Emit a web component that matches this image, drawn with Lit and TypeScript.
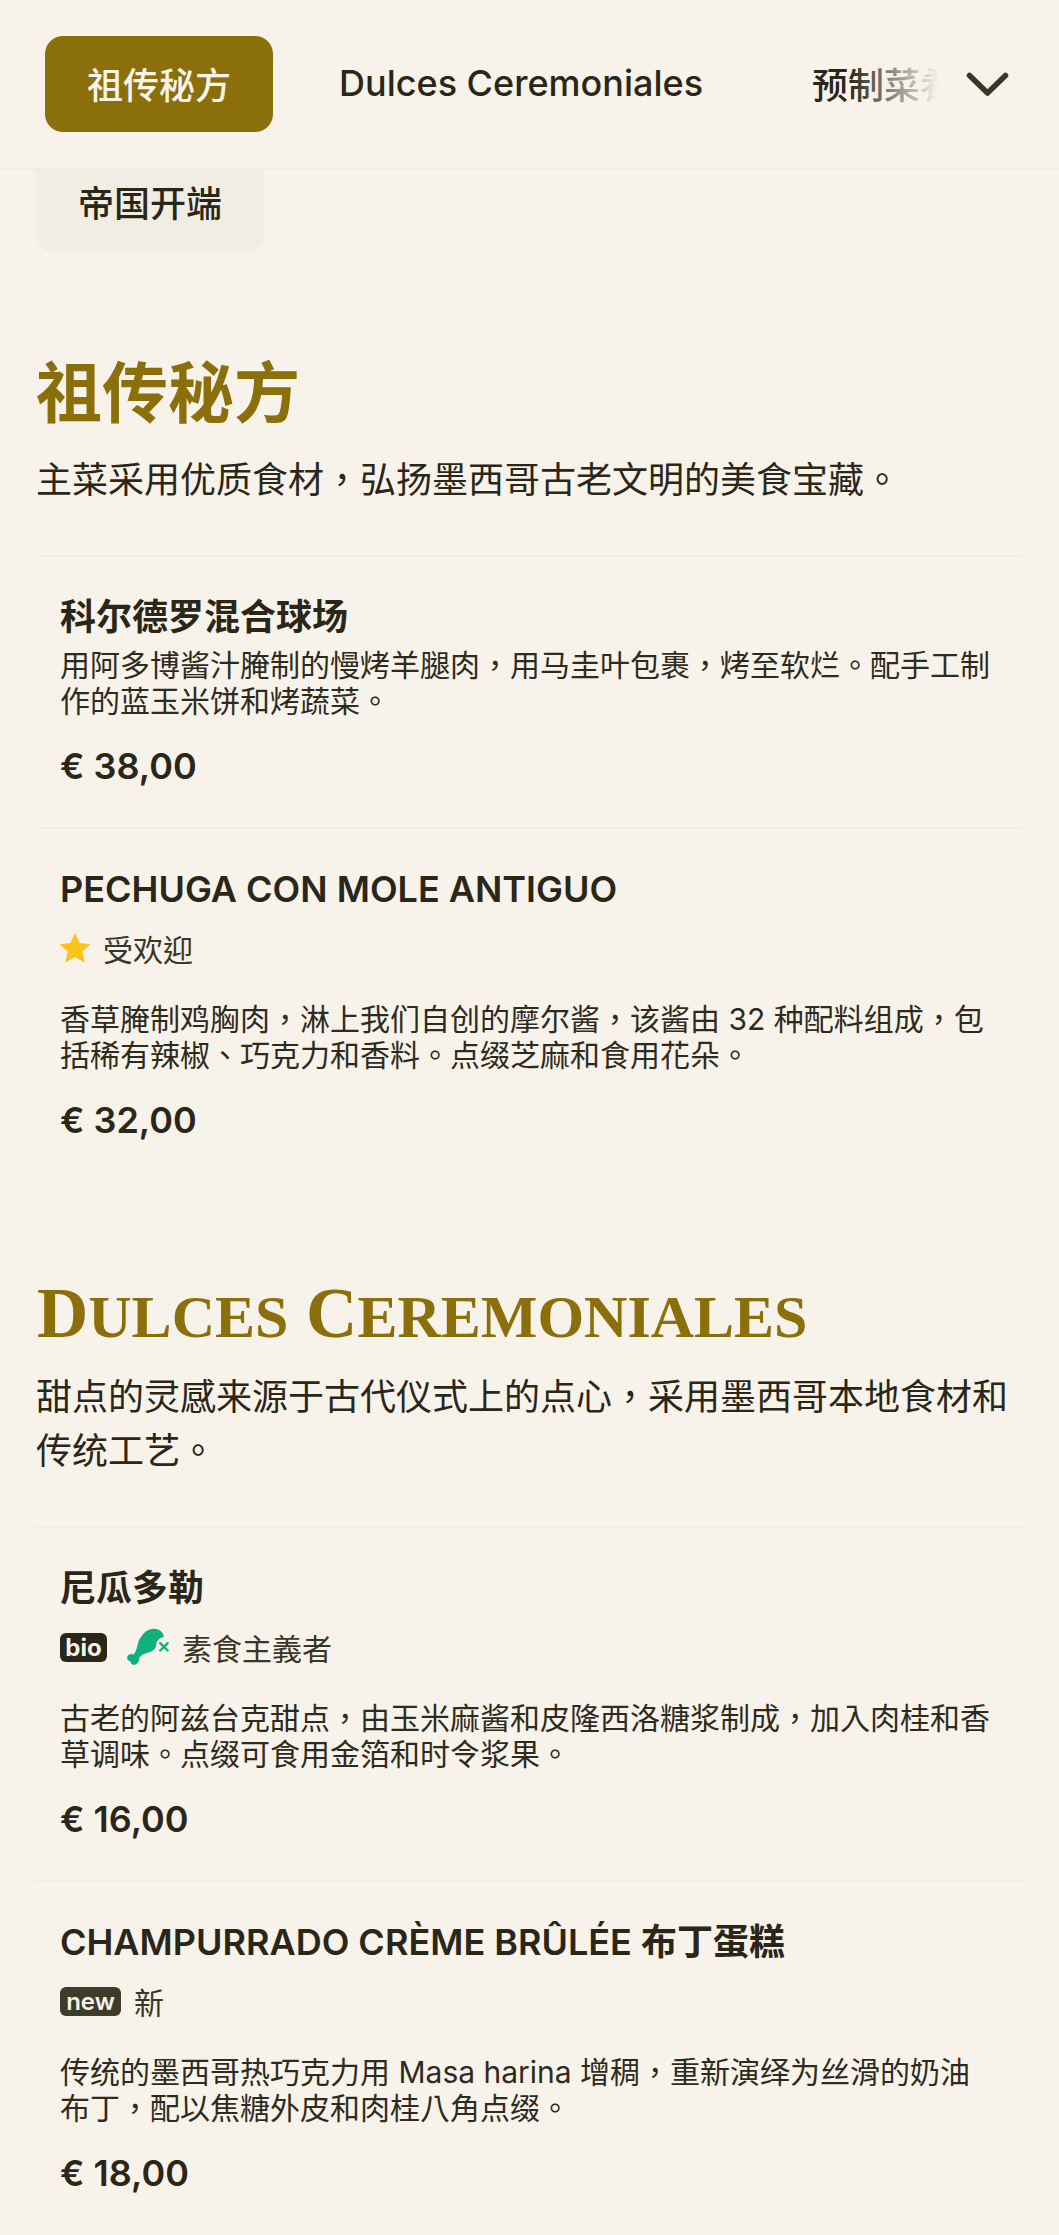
import { LitElement, html, css, svg } from "lit";
import { customElement } from "lit/decorators.js";

const star = html`<svg class="star" viewBox="0 0 24 24"><path fill="#fcc419" d="M12 .6l3.400 7.700 8.200.9-6.100 5.500 1.700 8.100L12 18.700l-7.200 4.100 1.700-8.100L.4 9.200l8.200-.9z"/></svg>`;
const meat = html`<svg class="meat" viewBox="18 13 125 113">${svg`
  <path fill="#10b07c" d="M72 25C82 15 105 10 118 22C124 27 127 33 128 40C116 42 106 50 105 62C104 70 102 74 98 78C88 86 76 88 68 90C62 92 57 97 54 103C56 110 50 120 41 122C33 124 29 118 28 112C22 112 17 106 19 98C21 91 30 88 38 92C44 84 47 74 49 64C52 50 60 36 72 25Z"/>
  <path stroke="#10b07c" stroke-width="7" stroke-linecap="round" fill="none" d="M117 58L139 80M139 58L117 80"/>
`}</svg>`;

@customElement("app-root")
export class AppRoot extends LitElement {
  static styles = css`
    :host {
      display: block;
      width: 1059px;
      min-height: 2235px;
      background: #f7f3eb;
      color: #2a2618;
      font-family: Inter, "Noto Sans CJK TC", sans-serif;
      overflow: hidden;
    }
    .nav {
      height: 170px;
      box-sizing: border-box;
      border-bottom: 2px solid #f0ede2;
      display: flex;
      align-items: flex-start;
      padding: 36px 0 0 45px;
      position: relative;
      overflow: hidden;
    }
    .tab {
      height: 96px;
      box-sizing: border-box;
      padding: 0 42px 3px;
      display: flex;
      align-items: center;
      font-size: 36px;
      font-weight: 500;
      white-space: nowrap;
      flex: none;
      margin-right: 25px;
    }
    .tab.active {
      width: 228px;
      justify-content: center;
      padding: 0 0 3px;
      margin-right: 24px;
      background: #8b6f0b;
      color: #f8f4ec;
      border-radius: 18px;
    }
    .fade {
      position: absolute;
      right: 0;
      top: 0;
      bottom: 0;
      width: 210px;
      background: linear-gradient(to right, rgba(247, 243, 235, 0) 0, #f7f3eb 90px);
    }
    .chev {
      position: absolute;
      left: 966px;
      top: 72px;
      width: 43px;
      height: 26px;
    }
    .pill-row {
      padding: 0 36px;
    }
    .pill {
      width: 228px;
      height: 82px;
      box-sizing: border-box;
      padding-bottom: 20px;
      background: #f0eee3;
      border-radius: 0 0 18px 18px;
      display: flex;
      align-items: center;
      justify-content: center;
      font-size: 36px;
      font-weight: 500;
    }
    section {
      padding: 0 36px;
    }
    .sec1 { margin-top: 99px; }
    .sec2 { margin-top: 90px; }
    h2 {
      margin: 0;
      color: #8b6f0b;
      font-size: 66px;
      font-weight: 700;
      line-height: 84px;
    }
    h2.serif {
      font-family: "Liberation Serif", serif;
      font-size: 71px;
      line-height: 84px;
      margin: 0 0 -7px 1px;
      text-transform: uppercase;
    }
    h2.serif span { font-size: 60px; }
    .sub {
      margin: 0;
      font-size: 36px;
      line-height: 54px;
      padding: 18px 0 48px;
      border-bottom: 2px solid #f0ede2;
    }
    .item {
      padding: 36px 24px 0 24px;
      border-bottom: 2px solid #f0ede2;
    }
    .item:last-child { border-bottom: 0; }
    .title {
      font-size: 36px;
      line-height: 48px;
      font-weight: 600;
    }
    .tags {
      display: flex;
      align-items: center;
      height: 42px;
      margin-top: 14px;
      margin-bottom: 32px;
      font-size: 30px;
      color: #3a3626;
    }
    .star { width: 32px; height: 32px; margin: 0 12px 0 -1px; }
    .meat { width: 42px; height: 38px; margin: 0 13px 0 0; }
    .badge {
      height: 29px;
      border-radius: 6px;
      display: inline-flex;
      align-items: center;
      justify-content: center;
      color: #f7f3eb;
      font-size: 24px;
      font-weight: 700;
      margin-right: 20px;
    }
    .badge.bio { width: 47px; background: #2a2618; }
    .badge.new { width: 61px; background: #3f3b2a; margin-right: 13px; font-weight: 600; }
    .desc {
      margin: 0;
      font-size: 30px;
      line-height: 36px;
      color: #2f2b1c;
    }
    .desc.tight { margin-top: 6px; }
    .price {
      font-size: 36px;
      font-weight: 600;
      line-height: 48px;
      margin-top: 23px;
      padding-bottom: 37px;
    }
  `;

  private renderItem(title: string, tags: unknown, desc: string, price: string) {
    return html`<div class="item">
      <div class="title">${title}</div>
      ${tags ? html`<div class="tags">${tags}</div>` : null}
      <p class="desc ${tags ? "" : "tight"}">${desc}</p>
      <div class="price">${price}</div>
    </div>`;
  }

  render() {
    return html`
      <div class="nav">
        <div class="tab active">祖传秘方</div>
        <div class="tab">Dulces Ceremoniales</div>
        <div class="tab">预制菜肴</div>
        <div class="fade"></div>
        <svg class="chev" viewBox="0 0 43 26" fill="none" stroke="#3a3626" stroke-width="5.500" stroke-linecap="round" stroke-linejoin="round"><path d="M3.500 3.500L21.500 21 39.500 3.500"/></svg>
      </div>
      <div class="pill-row"><div class="pill">帝国开端</div></div>
      <section class="sec1">
        <h2>祖传秘方</h2>
        <p class="sub">主菜采用优质食材，弘扬墨西哥古老文明的美食宝藏。</p>
        ${this.renderItem("科尔德罗混合球场", null, "用阿多博酱汁腌制的慢烤羊腿肉，用马圭叶包裹，烤至软烂。配手工制作的蓝玉米饼和烤蔬菜。", "€ 38,00")}
        ${this.renderItem("PECHUGA CON MOLE ANTIGUO", html`${star}<span>受欢迎</span>`, "香草腌制鸡胸肉，淋上我们自创的摩尔酱，该酱由 32 种配料组成，包括稀有辣椒、巧克力和香料。点缀芝麻和食用花朵。", "€ 32,00")}
      </section>
      <section class="sec2">
        <h2 class="serif">D<span>ulces</span> C<span>eremoniales</span></h2>
        <p class="sub">甜点的灵感来源于古代仪式上的点心，采用墨西哥本地食材和传统工艺。</p>
        ${this.renderItem("尼瓜多勒", html`<span class="badge bio">bio</span>${meat}<span>素食主義者</span>`, "古老的阿兹台克甜点，由玉米麻酱和皮隆西洛糖浆制成，加入肉桂和香草调味。点缀可食用金箔和时令浆果。", "€ 16,00")}
        ${this.renderItem("CHAMPURRADO CRÈME BRÛLÉE 布丁蛋糕", html`<span class="badge new">new</span><span>新</span>`, "传统的墨西哥热巧克力用 Masa harina 增稠，重新演绎为丝滑的奶油布丁，配以焦糖外皮和肉桂八角点缀。", "€ 18,00")}
      </section>
    `;
  }
}
